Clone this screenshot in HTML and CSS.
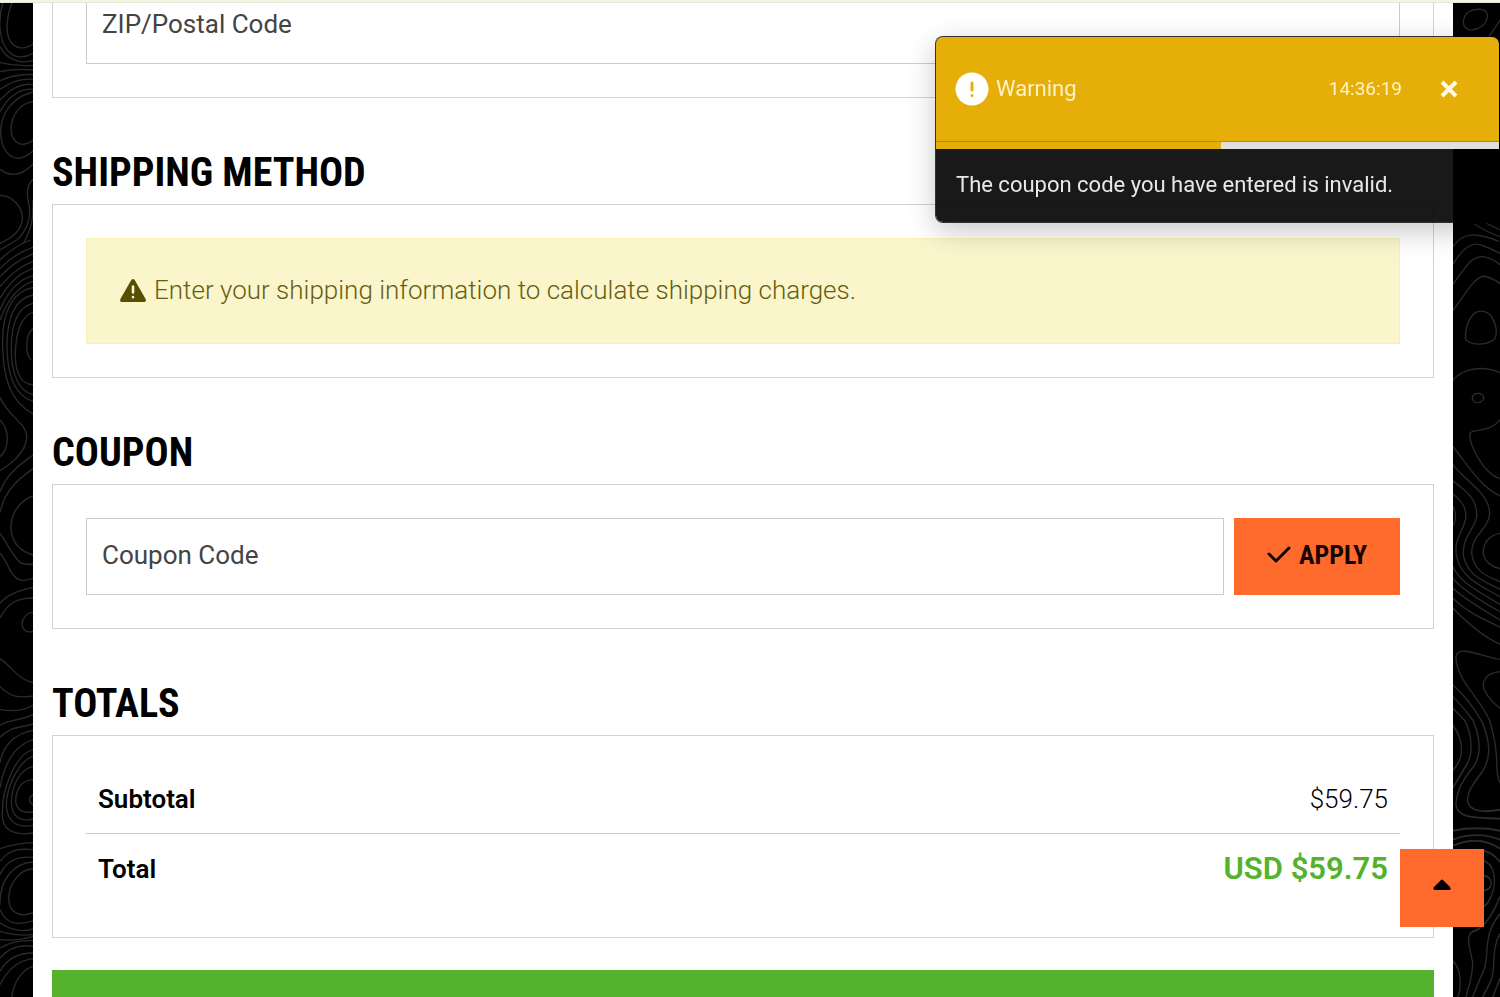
FILE: index.html
```html
<!DOCTYPE html>
<html lang="en">
<head>
<meta charset="utf-8">
<title>Checkout</title>
<link rel="stylesheet" href="styles.css">
</head>
<body>
<div class="topline"></div>
<div class="layout">
  <svg class="rail rail-left" viewBox="0 9 99 2982" preserveAspectRatio="xMinYMin slice" aria-hidden="true">
    <path d="M36 9C20 50 15 95 30 122C45 148 75 150 99 132M8 9C-5 60 -3 110 18 145C40 178 75 175 99 160M0 140C20 180 60 192 99 182M0 188Q50 200 99 196M0 215Q50 205 99 210M0 242Q50 220 99 224M0 268Q50 232 99 238M0 300Q50 245 99 254M0 335C30 280 70 265 99 268M99 276C40 290 0 340 2 400C4 450 30 478 60 474Q85 468 99 452M99 305C60 310 35 345 33 385C33 420 55 437 75 432Q92 428 99 420M0 508Q50 545 99 492M99 538C75 560 82 590 88 620C94 660 75 700 50 720M0 586C35 586 68 620 67 655C66 690 35 715 0 730M99 600C99 650 99 680 70 730"/>
    <g transform="translate(0 720)">
      <path d="M0 30L50 0M0 60Q40 20 92 0M0 85Q45 40 99 22M0 110Q45 62 99 42M0 140Q45 85 99 64M0 175Q40 105 99 85M0 210Q35 125 99 106M0 240Q35 145 99 124M99 143C35 155 5 220 8 320C10 430 40 490 99 522M99 165C45 175 20 235 21 320C22 420 50 468 99 484M99 190C55 200 34 250 34 320M99 217C65 225 47 280 46 340C45 400 65 434 99 434M99 265C75 285 75 345 94 360M34 320C33 410 60 455 99 464M0 472C25 530 80 550 80 590C80 635 35 670 0 692M0 540C15 555 22 575 22 595C22 625 12 640 0 650M0 755C20 700 65 670 99 645M0 818C15 745 60 715 99 686M99 768C50 785 28 835 34 875C40 915 65 935 99 945M0 880C20 905 40 955 65 970Q82 975 99 973M0 940C25 965 30 1015 65 1021Q82 1022 99 1015M0 1090C25 1060 60 1052 99 1042M0 1134C25 1085 55 1075 99 1074M99 1118C75 1118 60 1145 70 1165Q80 1180 99 1174"/>
    </g>
    <g transform="translate(0 1854)">
      <path d="M0 122C35 145 55 185 99 194M0 205C30 238 60 240 99 234M0 275Q60 285 99 262M0 322C30 302 65 308 99 290M0 358C30 325 60 330 99 318M0 435C8 380 50 345 99 337M0 510C15 420 55 380 99 365M99 395C45 410 0 520 8 605C15 645 60 652 99 645M99 415C55 430 18 510 19 565C22 618 60 630 99 622M99 445C60 455 35 500 34 555C36 600 65 612 99 603M99 485C65 485 47 515 47 550C50 580 75 585 99 582M99 530Q78 545 99 562M0 692Q50 675 99 674M0 730C30 690 65 692 99 695M0 770C20 725 55 715 99 718M0 860C-2 780 45 735 99 732M99 753C65 752 28 790 26 840C26 885 60 900 99 884M0 875C20 925 60 920 99 908M0 915Q55 950 99 932M0 940Q50 955 99 950M0 965Q50 970 99 956M0 990Q40 965 99 968M0 1020Q40 975 99 985M0 1060Q30 1005 99 1005M0 1100Q35 1030 99 1022M35 1140Q45 1065 99 1044"/>
    </g>
  </svg>
  <main class="panel">
    <section class="card card-address">
      <input class="field" type="text" placeholder="ZIP/Postal Code" aria-label="ZIP/Postal Code">
    </section>

    <h2 class="heading">SHIPPING METHOD</h2>
    <section class="card">
      <p class="notice">
        <svg class="notice-icon" viewBox="0 0 26 23" aria-hidden="true"><path fill="#564f02" d="M11.3 1Q13 -1 14.7 1L25.6 20Q26.500 23 24 23H2Q-.500 23 .4 20Z"/><path stroke="#faf5cb" stroke-width="2.600" stroke-linecap="round" d="M13 7.500V13.500M13 18V18.200"/></svg>
        <span>Enter your shipping information to calculate shipping charges.</span>
      </p>
    </section>

    <h2 class="heading">COUPON</h2>
    <form class="card coupon">
      <input class="field" type="text" placeholder="Coupon Code" aria-label="Coupon Code">
      <button class="apply" type="button">
        <svg class="apply-icon" viewBox="0 0 24 18" aria-hidden="true"><path d="M2 8L9 15L22 2"/></svg>
        <span>APPLY</span>
      </button>
    </form>

    <h2 class="heading">TOTALS</h2>
    <section class="card card-totals">
      <table class="totals">
        <tr><th scope="row">Subtotal</th><td>$59.75</td></tr>
        <tr class="grand"><th scope="row">Total</th><td>USD $59.75</td></tr>
      </table>
    </section>
    <button class="checkout" type="button" aria-label="Place order"></button>
  </main>
  <svg class="rail rail-right" viewBox="0 9 141 2982" preserveAspectRatio="xMinYMin slice" aria-hidden="true">
    <path d="M55 32C30 40 22 78 45 88C70 95 105 75 103 45C100 25 75 25 55 32M141 60Q125 85 105 114"/>
    <g transform="translate(-461 660)">
      <path d="M461 80C485 45 520 30 600 65M525 12Q560 35 602 50M562 10L602 30M461 132C490 85 520 65 545 75Q575 85 602 100M461 192C495 150 510 110 550 110Q580 115 602 134M461 270C495 230 520 175 553 168Q575 172 602 190M520 285C535 268 560 270 575 288C592 312 595 340 585 358C565 375 520 378 500 360C495 345 502 305 520 285M461 480C490 445 550 435 602 458M537 520C518 520 514 535 525 546C540 552 555 542 553 532Q548 520 537 520M602 600C570 640 520 625 512 640C505 665 550 760 602 776M461 680C495 720 540 800 602 828M461 735C500 785 570 820 571 880C568 930 515 945 517 1000C525 1060 570 1070 602 1085M461 783C495 810 535 835 532 890C525 930 485 955 493 1010C505 1070 560 1085 602 1108M461 822C485 840 505 865 498 900C488 940 462 960 472 1010C485 1075 550 1100 602 1130M461 860Q475 885 463 915M602 940C570 945 550 970 552 1000C555 1025 580 1042 602 1046M461 1040C480 1085 530 1110 602 1153M461 1075C485 1105 530 1135 602 1175M461 1105Q500 1140 602 1200M461 1135C500 1175 540 1190 602 1222M461 1165C500 1205 550 1250 602 1273M602 1318C560 1315 475 1270 470 1310C470 1380 540 1430 570 1500M602 1355C560 1358 545 1385 555 1410Q570 1440 602 1465M461 1395Q510 1440 545 1500M461 1430Q495 1465 520 1500M461 1465L495 1500"/>
    </g>
    <g transform="translate(-71 660) scale(1 1.487)">
      <path d="M180 1008C200 1050 203 1090 203 1108C205 1130 212 1135 212 1135M155 1008C190 1060 180 1090 160 1112C130 1140 110 1155 116 1175C125 1195 170 1195 212 1190M130 1008C160 1055 152 1085 130 1105C105 1125 80 1150 80 1180C85 1210 150 1205 212 1208M105 1008C130 1040 130 1075 115 1095Q85 1130 71 1145M71 1020C105 1050 105 1085 71 1110M71 1232Q140 1222 212 1232M71 1250Q140 1232 212 1250M71 1262Q150 1240 212 1268M150 1270Q190 1275 212 1295M164 1293C195 1300 205 1335 185 1365Q175 1380 164 1385M164 1323C190 1325 195 1350 164 1353M212 1365Q180 1420 140 1433C100 1440 125 1470 130 1500C130 1530 115 1550 110 1568M212 1400C160 1440 180 1480 165 1510Q140 1550 130 1568M212 1440C185 1470 200 1510 185 1535L160 1568M71 1495C95 1510 98 1545 85 1568M212 1530L190 1568"/>
    </g>
  </svg>
</div>

<aside class="toast" role="alert">
  <header class="toast-head">
    <svg class="toast-icon" viewBox="0 0 34 34" aria-hidden="true"><circle cx="17" cy="17" r="16.500" fill="#fff"/><path stroke="#e6ae09" stroke-width="3" stroke-linecap="round" d="M17 11V18M17 23.400V23.600"/></svg>
    <strong class="toast-title">Warning</strong>
    <time class="toast-time">14:36:19</time>
    <button class="toast-close" type="button" aria-label="Close"><svg viewBox="0 0 18 18" aria-hidden="true"><path d="M2 2L16 16M16 2L2 16"/></svg></button>
  </header>
  <div class="toast-progress"><div class="toast-bar" style="width:50.600%"></div></div>
  <p class="toast-body">The coupon code you have entered is invalid.</p>
</aside>

<a class="to-top" href="#" aria-label="Back to top"><svg viewBox="0 0 18 11" aria-hidden="true"><path d="M1.500 11Q-.500 10 1 8L8 1Q9 0 10 1L17 8Q18.500 10 16.500 11Z"/></svg></a>
</body>
</html>
```
FILE: styles.css
```css
* { box-sizing: border-box; }

body {
  margin: 0;
  height: 100vh;
  overflow: hidden;
  display: flex;
  flex-direction: column;
  background: #000;
  color: #000;
  font: 400 26px/36px Roboto, sans-serif;
}

.topline {
  flex: none;
  height: 3px;
  background: #f3f5e4;
  border-bottom: 1px solid #e4e6d6;
}

.layout {
  flex: 1;
  min-height: 0;
  display: flex;
}

.rail {
  flex: none;
  height: 100%;
  fill: none;
  stroke: #2b2b2b;
  stroke-width: 4;
}
.rail-left { width: 33px; }
.rail-right { width: 47px; }

.panel {
  flex: 1;
  min-width: 0;
  padding: 0 19px;
  background: #fff;
  overflow: hidden;
}

.heading {
  margin: 54px 0 10px;
  font: 700 40px/42px "Roboto Condensed", "Liberation Sans Narrow", Roboto, sans-serif;
}

.card {
  padding: 33px;
  border: 1px solid #d2d2d2;
}

.card-address {
  margin-top: -50px;
}

.field {
  display: block;
  width: 100%;
  height: 77px;
  padding: 0 15px 3px;
  border: 1px solid #ccc;
  border-radius: 0;
  background: #fff;
  font: inherit;
  color: #444;
}
.field::placeholder { color: #444; opacity: 1; }

.notice {
  display: flex;
  align-items: center;
  gap: 8px;
  margin: 0;
  padding: 33px 33px 35px;
  border: 1px solid #f6f0b8;
  background: #faf5cb;
  color: #665e10;
  font-weight: 300;
}
.notice-icon { width: 26px; height: 23px; }

.coupon {
  display: flex;
  gap: 10px;
}
.coupon .field { flex: 1; width: auto; }

.apply {
  display: flex;
  align-items: center;
  justify-content: center;
  gap: 8px;
  width: 166px;
  padding: 0 0 3px;
  border: 0;
  background: #ff6b2c;
  color: #160400;
  font: 700 26px/36px "Roboto Condensed", "Liberation Sans Narrow", Roboto, sans-serif;
}
.apply-icon {
  width: 24px;
  height: 18px;
  fill: none;
  stroke: #160400;
  stroke-width: 3;
  stroke-linecap: round;
  stroke-linejoin: round;
}

.card-totals { padding-top: 28px; }
.totals {
  width: 100%;
  border-collapse: collapse;
}
.totals th,
.totals td { padding: 17px 12px 16px; }
.totals th {
  text-align: left;
  font-weight: 600;
}
.totals td {
  text-align: right;
  font-weight: 300;
}
.totals .grand th,
.totals .grand td {
  padding-bottom: 17px;
  border-top: 1px solid #ccc;
}
.totals .grand td {
  color: #54b22c;
  font-size: 31px;
  font-weight: 600;
}

.checkout {
  display: block;
  width: 100%;
  height: 77px;
  margin-top: 32px;
  border: 0;
  background: #54b22c;
}

.toast {
  position: fixed;
  top: 36px;
  right: 0;
  width: 565px;
  border: 1px solid rgba(0, 0, 0, .8);
  border-radius: 8px;
  overflow: hidden;
  background: rgba(0, 0, 0, .9);
  background-clip: padding-box;
  box-shadow: 0 8px 28px rgba(0, 0, 0, .22);
  color: #e8e8e8;
  font-size: 22px;
}
.toast-head {
  display: flex;
  align-items: center;
  height: 105px;
  padding: 0 41px 0 19px;
  background: #e6ae09;
  border-bottom: 1px solid #b88b07;
  color: #fff3c4;
}
.toast-icon {
  width: 34px;
  height: 34px;
  margin-right: 7px;
}
.toast-title { flex: 1; font-weight: 400; }
.toast-time { font-size: 19px; }
.toast-close {
  width: 18px;
  height: 18px;
  margin-left: 38px;
  padding: 0;
  border: 0;
  background: none;
}
.toast-close svg {
  display: block;
  fill: none;
  stroke: #fffbe6;
  stroke-width: 4;
}
.toast-progress {
  height: 7px;
  background: #e0dfdc;
}
.toast-bar {
  height: 100%;
  background: #e6ae09;
}
.toast-body {
  margin: 0;
  padding: 18px 20px 19px;
}

.to-top {
  position: fixed;
  right: 16px;
  bottom: 70px;
  width: 84px;
  height: 78px;
  display: flex;
  align-items: center;
  justify-content: center;
  padding-bottom: 8px;
  background: #ff6b2c;
}
.to-top svg { width: 18px; height: 11px; }
```
